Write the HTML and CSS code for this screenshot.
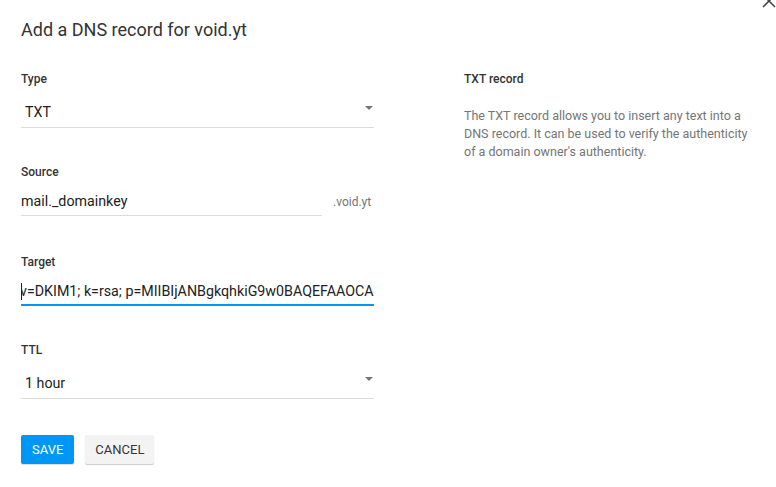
FILE: index.html
```html
<!DOCTYPE html>
<html>
<head>
<meta charset="utf-8">
<link rel="stylesheet" href="styles.css">
</head>
<body>
<div class="dialog">
  <button class="close" aria-label="Close">
    <svg width="14" height="14" viewBox="0 0 14 14"><path d="M1 1 L13 13 M13 1 L1 13" stroke="#444" stroke-width="1.6" fill="none"/></svg>
  </button>
  <h1 class="title">Add a DNS record for void.yt</h1>
  <div class="content">
    <form class="form">
      <div class="group">
        <div class="label">Type</div>
        <div class="select">
          <span class="value">TXT</span>
          <span class="arrow"></span>
        </div>
      </div>
      <div class="group group-source">
        <div class="label">Source</div>
        <div class="source-row">
          <div class="input source-input"><span class="value">mail._domainkey</span></div>
          <span class="suffix">.void.yt</span>
        </div>
      </div>
      <div class="group">
        <div class="label">Target</div>
        <div class="input focused"><span class="caret"></span><span class="value scrolled">v=DKIM1; k=rsa; p=MIIBIjANBgkqhkiG9w0BAQEFAAOCAQ8AMIIBCgKCAQEA</span></div>
      </div>
      <div class="group">
        <div class="label">TTL</div>
        <div class="select">
          <span class="value">1 hour</span>
          <span class="arrow"></span>
        </div>
      </div>
      <div class="actions">
        <button type="button" class="btn btn-primary">SAVE</button>
        <button type="button" class="btn btn-default">CANCEL</button>
      </div>
    </form>
    <aside class="help">
      <h2 class="help-title">TXT record</h2>
      <p class="help-text">The TXT record allows you to insert any text into a DNS record. It can be used to verify the authenticity of a domain owner's authenticity.</p>
    </aside>
  </div>
</div>
</body>
</html>
```

FILE: styles.css
```css
* { box-sizing: border-box; }
html, body { margin: 0; padding: 0; background: #fff; }
body {
  font-family: Roboto, "Liberation Sans", sans-serif;
  color: #333;
  width: 776px;
  height: 487px;
  overflow: hidden;
}
.dialog {
  position: relative;
  padding: 18px 21px 0 21px;
}
.close {
  position: absolute;
  top: -6px;
  right: 0px;
  border: 0;
  background: none;
  padding: 0;
  width: 14px;
  height: 14px;
  line-height: 0;
}
.title {
  margin: 0;
  font-size: 18px;
  font-weight: 400;
  line-height: 24px;
  color: #333;
}
.content {
  display: flex;
  margin-top: 29px;
}
.form {
  width: 353px;
  flex: none;
}
.group { margin-bottom: 36px; }
.group-source { margin-bottom: 38px; }
.label {
  font-size: 12px;
  font-weight: 500;
  line-height: 16px;
  color: #333;
}
.select {
  position: relative;
  margin-top: 8px;
  padding: 7px 0 5px 4px;
  border-bottom: 1px solid #dcdcdc;
  font-size: 14.25px;
  line-height: 20px;
  color: #222;
}
.arrow {
  position: absolute;
  right: 1px;
  top: 11px;
  width: 0;
  height: 0;
  border-left: 4px solid transparent;
  border-right: 4px solid transparent;
  border-top: 4px solid #757575;
}
.source-row {
  display: flex;
  align-items: flex-start;
}
.input {
  margin-top: 4px;
  padding: 7px 0 4px 0;
  border-bottom: 1px solid #dcdcdc;
  font-size: 14.25px;
  line-height: 20px;
  color: #222;
  white-space: nowrap;
  overflow: hidden;
  position: relative;
}
.source-input { width: 301px; flex: none; }
.suffix {
  margin-left: 11px;
  margin-top: 14px;
  font-size: 12px;
  line-height: 16px;
  color: #757575;
}
.input.focused {
  border-bottom: 2px solid #0096f5;
  padding-bottom: 3px;
}
.caret {
  position: absolute;
  left: 0;
  top: 9px;
  width: 1px;
  height: 17px;
  background: #222;
}
.scrolled {
  display: inline-block;
  margin-left: -1px;
}
.actions {
  display: flex;
  gap: 11px;
  margin-top: 36px;
}
.btn {
  font-family: Roboto, "Liberation Sans", sans-serif;
  font-size: 13px;
  height: 29px;
  padding: 0 11px;
  border: 0;
  border-radius: 2px;
  line-height: 29px;
  cursor: pointer;
}
.btn-primary {
  background: #0096f5;
  color: #fff;
  box-shadow: 0 1px 1px rgba(0,0,0,0.15);
}
.btn-default {
  background: #f3f3f3;
  color: #333;
  padding: 0 10px;
  box-shadow: 0 1px 1px rgba(0,0,0,0.2);
}
.help {
  margin-left: 90px;
  width: 290px;
}
.help-title {
  margin: 0;
  font-size: 12px;
  font-weight: 500;
  line-height: 16px;
  color: #333;
}
.help-text {
  margin: 20px 0 0 0;
  font-size: 12.5px;
  line-height: 18px;
  color: #757575;
}
```
